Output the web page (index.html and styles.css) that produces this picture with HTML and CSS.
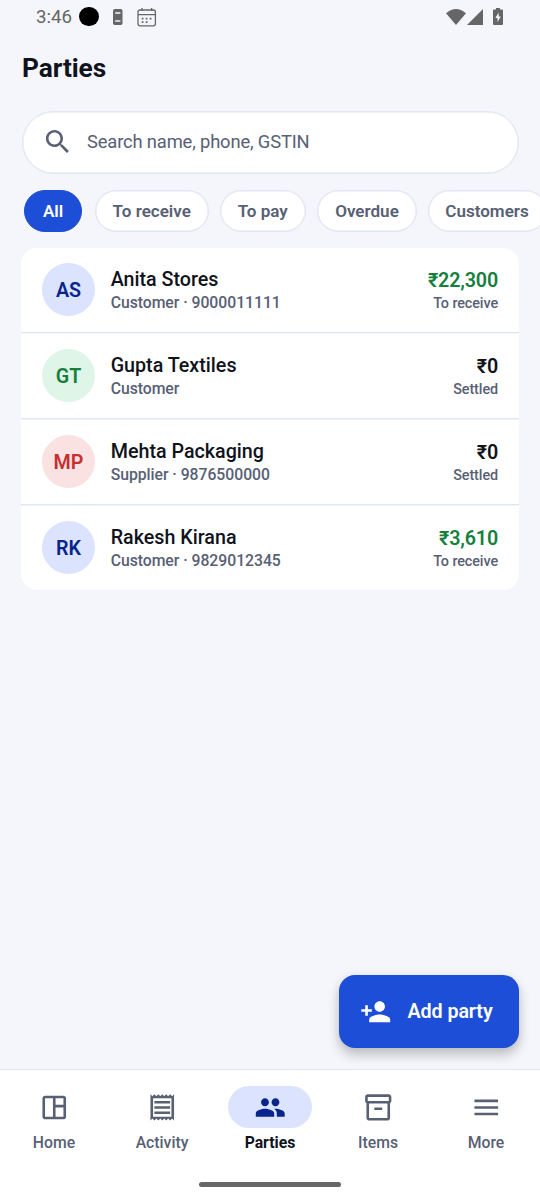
FILE: index.html
```html
<!DOCTYPE html>
<html lang="en">
<head>
<meta charset="utf-8">
<title>Parties</title>
<link rel="stylesheet" href="styles.css">
</head>
<body>
<div class="app">
  <header class="status">
    <span class="clock">3:46</span>
    <span class="dot"></span>
    <svg class="device" viewBox="0 0 10 16"><rect width="9.5" height="16" rx="1.8" fill="#666"/><path d="M2.2 4h5.2M2.2 12h5.2" stroke="#f4f6fb" stroke-width="1.6"/></svg>
    <svg class="calendar" viewBox="0 0 20 20" fill="none" stroke="#666" stroke-width="1.3"><rect x="1" y="3" width="17.4" height="15.8" rx="2"/><path d="M1 7.700h17.400M5 1v3M14.600 1v3"/><path d="M8.700 11.600h1.800M12.700 11.600h1.800M4.700 11.600h1.800M4.700 15.200h1.800M8.700 15.200h1.800" stroke-width="1.800"/></svg>
    <span class="spacer"></span>
    <svg class="wifi" viewBox="0 0 20 16"><path d="M0 4.300Q10-4.200 20 4.300L10 16z" fill="#666"/></svg>
    <svg class="signal" viewBox="0 0 16 16"><path d="M0 16L16 0v16z" fill="#666"/></svg>
    <svg class="battery" viewBox="0 0 10 17"><path d="M3 0h4v1.500h2q1 0 1 1V16q0 1-1 1H1q-1 0-1-1V2.500q0-1 1-1h2z" fill="#666"/><path d="M5.700 4.500L2.300 10h2.200v4L7.800 8.500H5.700z" fill="#f4f6fb"/></svg>
  </header>
  <h1 class="title">Parties</h1>
  <div class="search">
    <svg class="icon" viewBox="0 0 24 24"><path d="M15.500 14h-.79l-.28-.27C15.410 12.590 16 11.110 16 9.500 16 5.910 13.090 3 9.500 3S3 5.910 3 9.500 5.910 16 9.500 16c1.610 0 3.090-.59 4.230-1.570l.27.28v.79l5 4.990L20.490 19l-4.990-5zm-6 0C7.010 14 5 11.990 5 9.500S7.010 5 9.500 5 14 7.010 14 9.500 11.990 14 9.500 14z"/></svg>
    <span>Search name, phone, GSTIN</span>
  </div>
  <nav class="chips">
    <span class="chip chip-on">All</span>
    <span class="chip receive">To receive</span>
    <span class="chip pay">To pay</span>
    <span class="chip overdue">Overdue</span>
    <span class="chip customers">Customers</span>
  </nav>
  <main class="card">
    <div class="row">
      <span class="avatar blue">AS</span>
      <div class="who"><div class="name">Anita Stores</div><div class="sub">Customer · 9000011111</div></div>
      <div class="sum"><div class="amount due">₹22,300</div><div class="state">To receive</div></div>
    </div>
    <div class="row">
      <span class="avatar green">GT</span>
      <div class="who"><div class="name">Gupta Textiles</div><div class="sub">Customer</div></div>
      <div class="sum"><div class="amount">₹0</div><div class="state">Settled</div></div>
    </div>
    <div class="row">
      <span class="avatar red">MP</span>
      <div class="who"><div class="name">Mehta Packaging</div><div class="sub">Supplier · 9876500000</div></div>
      <div class="sum"><div class="amount">₹0</div><div class="state">Settled</div></div>
    </div>
    <div class="row">
      <span class="avatar blue">RK</span>
      <div class="who"><div class="name">Rakesh Kirana</div><div class="sub">Customer · 9829012345</div></div>
      <div class="sum"><div class="amount due">₹3,610</div><div class="state">To receive</div></div>
    </div>
  </main>
  <div class="fab">
    <svg class="icon" viewBox="0 0 24 24"><path d="M15 12c2.210 0 4-1.790 4-4s-1.790-4-4-4-4 1.790-4 4 1.790 4 4 4zm-9-2V7H4v3H1v2h3v3h2v-3h3v-2H6zm9 4c-2.670 0-8 1.340-8 4v2h16v-2c0-2.660-5.330-4-8-4z"/></svg>
    <span>Add party</span>
  </div>
  <footer class="bottom">
    <div class="tabs">
      <div class="tab"><span class="pill"><svg class="icon" viewBox="0 0 24 24"><path d="M19 3H5c-1.100 0-2 .9-2 2v14c0 1.100.9 2 2 2h14c1.100 0 2-.9 2-2V5c0-1.100-.9-2-2-2zM5 19V5h6v14H5zm14 0h-6v-7h6v7zm0-9h-6V5h6v5z"/></svg></span><span>Home</span></div>
      <div class="tab"><span class="pill"><svg class="icon" viewBox="0 0 24 24"><path d="M19.500 3.500L18 2l-1.500 1.500L15 2l-1.500 1.500L12 2l-1.500 1.500L9 2 7.500 3.500 6 2 4.500 3.500 3 2v20l1.500-1.500L6 22l1.500-1.500L9 22l1.500-1.500L12 22l1.500-1.500L15 22l1.500-1.500L18 22l1.500-1.500L21 22V2l-1.500 1.500zM19 19.090H5V4.910h14v14.180zM6 15h12v2H6zm0-4h12v2H6zm0-4h12v2H6z"/></svg></span><span>Activity</span></div>
      <div class="tab tab-on"><span class="pill"><svg class="icon" viewBox="0 0 24 24"><path d="M16 11c1.660 0 2.990-1.340 2.990-3S17.660 5 16 5s-3 1.340-3 3 1.340 3 3 3zm-8 0c1.660 0 2.990-1.340 2.990-3S9.660 5 8 5 5 6.340 5 8s1.340 3 3 3zm0 2c-2.330 0-7 1.170-7 3.500V19h14v-2.500c0-2.330-4.670-3.500-7-3.500zm8 0c-.29 0-.62.02-.97.05 1.160.84 1.970 1.970 1.970 3.450V19h6v-2.500c0-2.330-4.670-3.500-7-3.500z"/></svg></span><span>Parties</span></div>
      <div class="tab"><span class="pill"><svg class="icon" viewBox="0 0 24 24"><path d="M20 2H4c-1 0-2 .9-2 2v3.010c0 .72.43 1.340 1 1.690V20c0 1.100 1.100 2 2 2h14c.9 0 2-.9 2-2V8.700c.57-.35 1-.97 1-1.690V4c0-1-1-2-2-2zm-1 18H5V9h14v11zm1-13H4V4h16v3zM9 12h6v2H9z"/></svg></span><span>Items</span></div>
      <div class="tab"><span class="pill"><svg class="icon" viewBox="0 0 24 24"><path d="M3 18h18v-2H3v2zm0-5h18v-2H3v2zm0-7v2h18V6H3z"/></svg></span><span>More</span></div>
    </div>
    <div class="handle"></div>
  </footer>
</div>
</body>
</html>
```

FILE: styles.css
```css
* { box-sizing: border-box; }
body { margin: 0; font-family: Roboto, "Liberation Sans", sans-serif; background: #f4f6fb; color: #10131c; }
.app { position: relative; width: 540px; height: 1200px; overflow: hidden; display: flex; flex-direction: column; }
.icon { width: 31.5px; height: 31.5px; fill: currentColor; flex: none; }

.status { height: 33px; padding: 0 37px 0 36px; display: flex; align-items: center; flex: none; }
.status svg { flex: none; }
.clock { font-size: 18.700px; color: #666; width: 43px; white-space: nowrap; }
.dot { width: 19.500px; height: 19.500px; border-radius: 50%; background: #000; }
.device { width: 10px; height: 16px; margin-left: 14px; }
.calendar { width: 20px; height: 20px; margin-left: 14px; }
.spacer { flex: 1; }
.wifi { width: 20px; height: 16px; }
.signal { width: 16px; height: 16px; margin: 0 10px 0 1px; }
.battery { width: 10px; height: 17px; }

.title { margin: 18px 22px 0; height: 34px; line-height: 34px; font-size: 26.250px; font-weight: 700; letter-spacing: -.06px; }
.search { margin: 26px 21.500px 0; height: 62.500px; flex: none; border: 1px solid #e2e6f0; box-shadow: inset 0 0 0 .5px #e2e6f0; border-radius: 32px; background: #fff; display: flex; align-items: center; padding: 0 0 1px 19px; gap: 14px; font-size: 18.375px; letter-spacing: -.16px; color: #586074; }

.chips { display: flex; margin: 16px 0 0 24px; flex: none; height: 42px; }
.chip { height: 42px; border: 1px solid #e2e6f0; box-shadow: inset 0 0 0 .5px #e2e6f0; border-radius: 21px; background: #fff; color: #586074; font-size: 17.060px; font-weight: 600; display: flex; align-items: center; justify-content: center; flex: none; width: 58px; }
.chip-on { background: #1d4ed8; border-color: #1d4ed8; box-shadow: none; color: #fff; }
.receive { width: 114.500px; margin-left: 12.500px; }
.pay { width: 86.500px; margin-left: 10.500px; }
.overdue { width: 100px; margin-left: 11px; }
.customers { width: 119px; margin-left: 10.500px; }

.card { margin: 16px 21px 0; border-radius: 16px; background: #fff; overflow: hidden; flex: none; }
.row { height: 85px; display: flex; padding: 15.500px 21px 0; border-bottom: 1px solid #e2e6f0; }
.row + .row { height: 86px; border-top: 1px solid #f1f4f9; }
.row:last-child { border-bottom: 0; }
.row + .row:last-child { height: 85px; }
.avatar { width: 53px; height: 53px; border-radius: 50%; display: flex; align-items: center; justify-content: center; font-size: 19.700px; font-weight: 600; margin-right: 15.700px; padding-top: 1px; flex: none; }
.blue { background: #dbe3ff; color: #08258c; }
.green { background: #def5e7; color: #15803d; }
.red { background: #fbe2e2; color: #c53030; }
.who { flex: 1; }
.name { font-size: 19.700px; font-weight: 500; line-height: 25px; margin-top: 4px; }
.sub { font-size: 15.750px; font-weight: 500; line-height: 21px; letter-spacing: -.03px; color: #586074; }
.sum { text-align: right; }
.amount { font-size: 19.700px; font-weight: 600; line-height: 26px; letter-spacing: -.15px; margin-top: 4.500px; }
.due { color: #15803d; }
.state { font-size: 14.400px; font-weight: 500; line-height: 20px; letter-spacing: -.1px; color: #586074; }

.fab { position: absolute; left: 339px; top: 974.500px; width: 180px; height: 73.500px; border-radius: 16px; background: #1d4ed8; color: #fff; display: flex; align-items: center; padding-left: 21px; gap: 16px; font-size: 19.700px; font-weight: 600; letter-spacing: -.08px; box-shadow: 0 7px 12px rgba(0,0,0,.22), 0 0 10px rgba(0,0,0,.05); }

.bottom { position: relative; margin-top: auto; height: 131px; flex: none; background: #fff; border-top: 1px solid #e2e6f0; padding-top: 16px; display: flex; flex-direction: column; align-items: center; }
.tabs { display: flex; width: 540px; }
.tab { flex: 1; display: flex; flex-direction: column; align-items: center; color: #586074; font-size: 15.750px; font-weight: 500; line-height: 20px; gap: 5px; }
.pill { width: 84px; height: 42px; padding: 1px 0 0 1px; border-radius: 21px; display: flex; align-items: center; justify-content: center; }
.pill .icon { transform: translate(-.5px, -.3px); }
.tab-on { color: #10131c; font-weight: 700; }
.tab-on .pill { background: #dbe3ff; color: #08258c; }
.handle { width: 142px; height: 5px; border-radius: 3px; background: #666; margin-top: 28.500px; }
```
